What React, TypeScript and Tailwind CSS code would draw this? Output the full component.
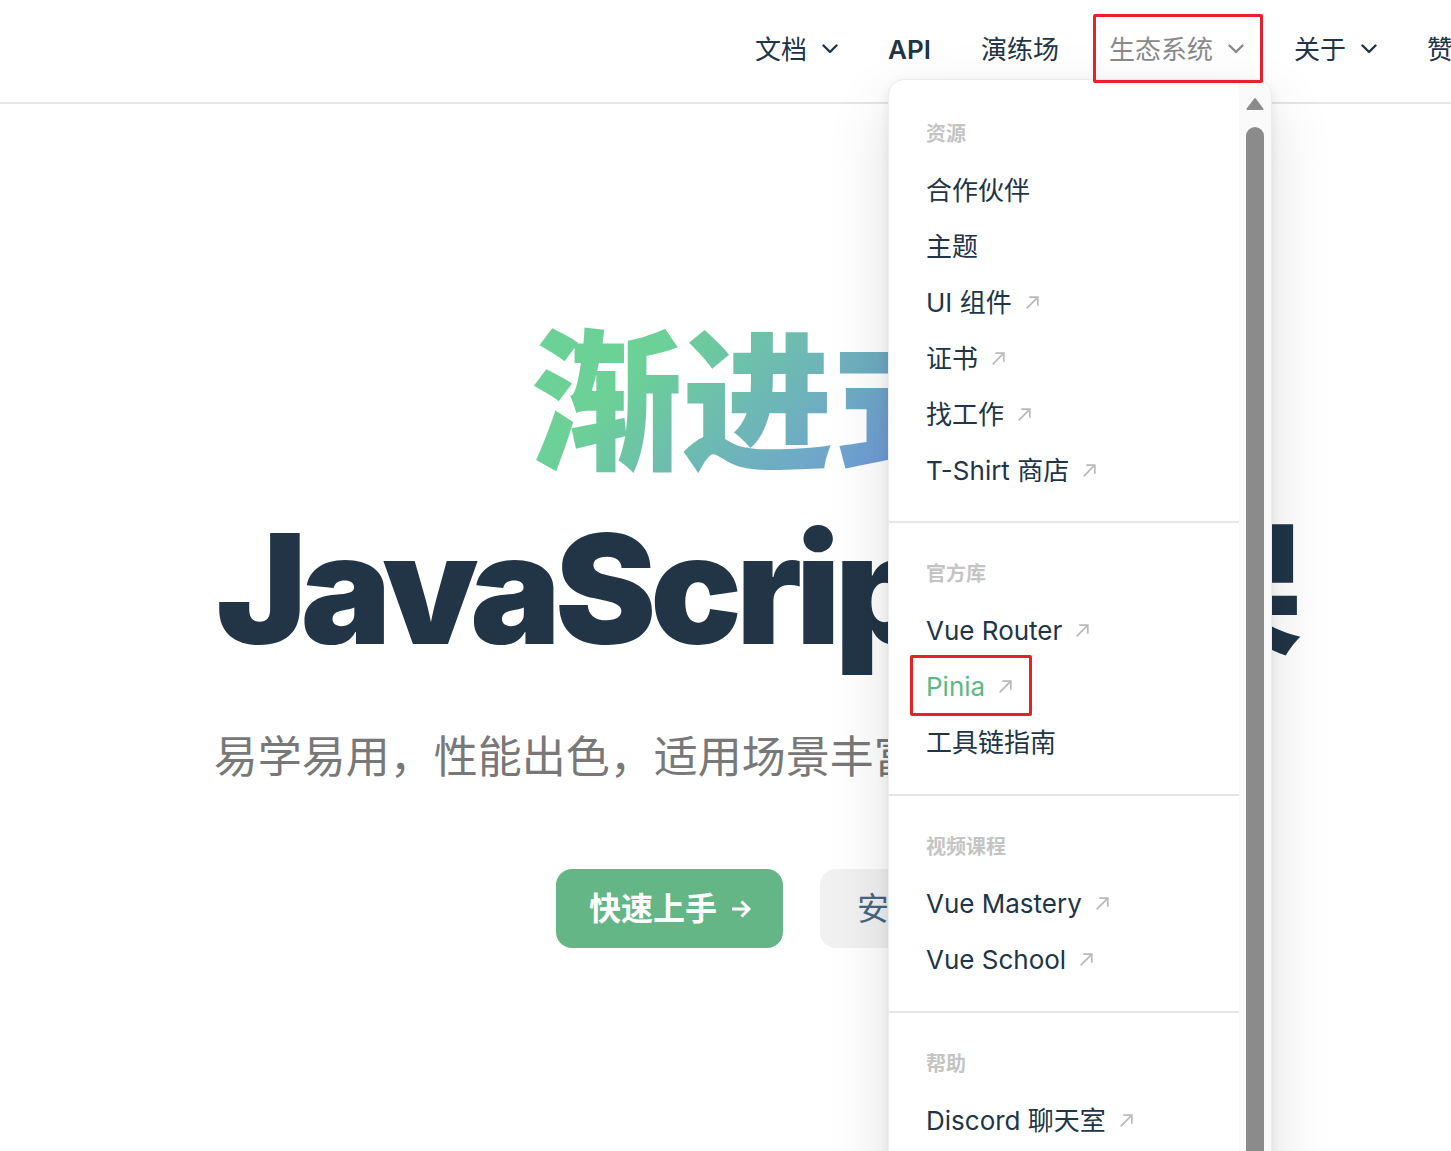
import React from "react";

type Item = { label: string; external?: boolean; active?: boolean };

const groups: { title: string; items: Item[] }[] = [
  {
    title: "资源",
    items: [
      { label: "合作伙伴" },
      { label: "主题" },
      { label: "UI 组件", external: true },
      { label: "证书", external: true },
      { label: "找工作", external: true },
      { label: "T-Shirt 商店", external: true },
    ],
  },
  {
    title: "官方库",
    items: [
      { label: "Vue Router", external: true },
      { label: "Pinia", external: true, active: true },
      { label: "工具链指南" },
    ],
  },
  {
    title: "视频课程",
    items: [
      { label: "Vue Mastery", external: true },
      { label: "Vue School", external: true },
    ],
  },
  {
    title: "帮助",
    items: [
      { label: "Discord 聊天室", external: true },
      { label: "GitHub 论坛", external: true },
      { label: "DEV Community", external: true },
    ],
  },
];

const navItems = [
  { label: "文档", menu: true },
  { label: "API", latin: true },
  { label: "演练场" },
  { label: "生态系统", menu: true, hover: true },
  { label: "关于", menu: true },
  { label: "赞助", menu: true },
];

const Chevron = () => (
  <svg width="16" height="10" viewBox="0 0 16 10" fill="none">
    <polyline points="1.5,1.5 8,8 14.5,1.5" stroke="currentColor" strokeWidth="2.4" strokeLinecap="round" strokeLinejoin="round" />
  </svg>
);

const OutLink = () => (
  <svg width="17" height="17" viewBox="0 0 16 16" fill="none" className="text-[#b9b9b9]">
    <path d="M2.5 13.5 L13 3 M5 3 H13 V11" stroke="currentColor" strokeWidth="1.6" />
  </svg>
);

const App = () => {
  return (
    <div className="relative w-[1451px] h-[1151px] overflow-hidden bg-white text-[#213547] font-[family-name:Inter,'Noto_Sans_CJK_SC',sans-serif]">
      {/* Top nav */}
      <header className="h-[104px] border-b-2 border-[#e5e5e5]">
        <nav className="flex h-full items-center pl-[730px] pb-1 whitespace-nowrap">
          {navItems.map((item) => (
            <div
              key={item.label}
              className={`flex items-center gap-[15px] px-[25px] text-[26px] ${
                item.latin ? "font-semibold" : "font-normal"
              } ${item.hover ? "text-[#8a8a8a]" : "text-[#213547]"}`}
            >
              <span>{item.label}</span>
              {item.menu && <Chevron />}
            </div>
          ))}
        </nav>
      </header>

      {/* Hero */}
      <section className="flex flex-col items-center pl-[63px] pt-[206px] text-center">
        <h1 className="whitespace-nowrap text-[152px] leading-[186px] font-black text-[#213547]">
          <span className="bg-[linear-gradient(135deg,#6cd196_25%,#7187f0)] bg-clip-text text-transparent tracking-[-1px]">
            渐进式
          </span>
          <br />
          <span className="tracking-[-6px]">JavaScript 框架</span>
        </h1>
        <p className="mt-[43px] whitespace-nowrap text-[44px] leading-[64px] text-[#787878]">
          易学易用，性能出色，适用场景丰富的 Web 前端框架。
        </p>
        <div className="mt-[80px] flex gap-[37px]">
          <a className="flex h-[79px] items-center gap-[13px] rounded-[16px] bg-[#64b687] pl-[33px] pr-[31px] text-[32px] font-bold text-white">
            快速上手
            <svg width="22" height="20" viewBox="0 0 22 20" fill="none">
              <path d="M2 10 H19 M11.5 2.5 L19 10 L11.5 17.5" stroke="currentColor" strokeWidth="3" />
            </svg>
          </a>
          <a className="flex h-[79px] items-center rounded-[16px] bg-[#f1f1f1] px-[37px] text-[32px] font-normal text-[#476582]">
            安装
          </a>
        </div>
      </section>

      {/* Ecosystem dropdown */}
      <div className="absolute left-[888px] top-[79px] flex h-[1120px] w-[384px] overflow-hidden rounded-[16px] border border-[#ececec] bg-white shadow-[0_24px_64px_rgba(0,0,0,0.12),0_4px_12px_rgba(0,0,0,0.08)]">
        <div className="flex-1">
          {groups.map((group, gi) => (
            <div
              key={group.title}
              className={`px-[37px] ${
                gi === 0 ? "pt-[26px] pb-[23px]" : "pt-[23px] pb-6 border-t-2 border-[#e6e6e6]"
              }`}
            >
              <div className="flex h-[56px] items-center text-[20px] font-semibold text-[#c4c4c4]">
                {group.title}
              </div>
              {group.items.map((item) => (
                <div
                  key={item.label}
                  className={`flex h-[56px] items-center gap-3 whitespace-nowrap text-[26px] ${
                    item.active ? "text-[#5db885]" : "text-[#213547]"
                  }`}
                >
                  <span>{item.label}</span>
                  {item.external && <OutLink />}
                </div>
              ))}
            </div>
          ))}
        </div>
        {/* scrollbar */}
        <div className="flex w-[32px] flex-col items-center bg-[#fafafa] pt-[17px]">
          <svg width="18" height="14" viewBox="0 0 18 14">
            <polygon points="9,2 16.5,12 1.5,12" fill="#8b8b8b" stroke="#8b8b8b" strokeWidth="2" strokeLinejoin="round" />
          </svg>
          <div className="mt-[16px] w-[18px] flex-1 rounded-t-full bg-[#8b8b8b]" />
        </div>
      </div>

      {/* Highlight boxes */}
      <div className="absolute left-[1093px] top-[14px] h-[69px] w-[170px] rounded-[2px] border-[3px] border-[#e8202a]" />
      <div className="absolute left-[910px] top-[655px] h-[61px] w-[122px] rounded-[2px] border-[3px] border-[#e8202a]" />
    </div>
  );
};

export default App;
